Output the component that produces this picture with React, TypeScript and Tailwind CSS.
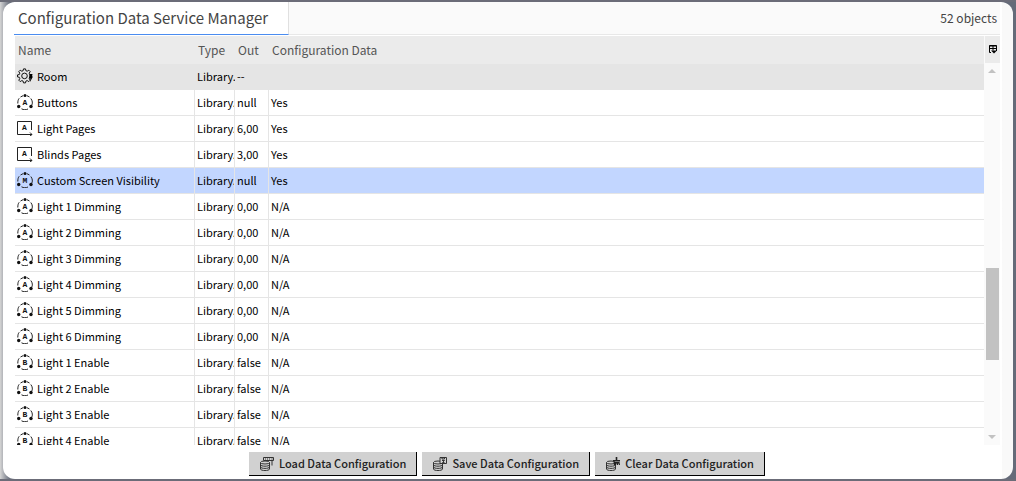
import { useState } from 'react';

type IconKind = 'gear' | 'analog' | 'boolean' | 'memory' | 'page';

interface DataObject {
    name: string;
    icon: IconKind;
    type: string;
    out: string;
    config: string;
}

const objects: DataObject[] = [
    { name: 'Room', icon: 'gear', type: 'Library.', out: '--', config: '' },
    { name: 'Buttons', icon: 'analog', type: 'Library.', out: 'null', config: 'Yes' },
    { name: 'Light Pages', icon: 'page', type: 'Library.', out: '6,00', config: 'Yes' },
    { name: 'Blinds Pages', icon: 'page', type: 'Library.', out: '3,00', config: 'Yes' },
    { name: 'Custom Screen Visibility', icon: 'memory', type: 'Library.', out: 'null', config: 'Yes' },
    { name: 'Light 1 Dimming', icon: 'analog', type: 'Library.', out: '0,00', config: 'N/A' },
    { name: 'Light 2 Dimming', icon: 'analog', type: 'Library.', out: '0,00', config: 'N/A' },
    { name: 'Light 3 Dimming', icon: 'analog', type: 'Library.', out: '0,00', config: 'N/A' },
    { name: 'Light 4 Dimming', icon: 'analog', type: 'Library.', out: '0,00', config: 'N/A' },
    { name: 'Light 5 Dimming', icon: 'analog', type: 'Library.', out: '0,00', config: 'N/A' },
    { name: 'Light 6 Dimming', icon: 'analog', type: 'Library.', out: '0,00', config: 'N/A' },
    { name: 'Light 1 Enable', icon: 'boolean', type: 'Library.', out: 'false', config: 'N/A' },
    { name: 'Light 2 Enable', icon: 'boolean', type: 'Library.', out: 'false', config: 'N/A' },
    { name: 'Light 3 Enable', icon: 'boolean', type: 'Library.', out: 'false', config: 'N/A' },
    { name: 'Light 4 Enable', icon: 'boolean', type: 'Library.', out: 'false', config: 'N/A' },
];

const letters = { analog: 'A', boolean: 'B', memory: 'M', page: 'A' };

function ObjectIcon({ kind }: { kind: IconKind }) {
    if (kind === 'gear') {
        return (
            <svg width="16" height="16" viewBox="0 0 16 16" fill="none" stroke="#111" className="shrink-0">
                <path d="M6.5.9h2l.4 1.8 1.3.5 1.6-1 1.4 1.4-1 1.6.5 1.3 1.8.4v2l-1.8.4-.5 1.3 1 1.6-1.4 1.4-1.6-1-1.3.5-.4 1.8h-2l-.4-1.8-1.3-.5-1.6 1-1.4-1.4 1-1.6-.5-1.3-1.8-.4v-2l1.8-.4.5-1.3-1-1.6 1.4-1.4 1.6 1 1.3-.5z" />
                <circle cx="7.5" cy="7.9" r="2.8" />
                <path d="M12.5 6h3l-.5 2.500h1L13 14l.4-3.500H12z" fill="#000" stroke="none" />
            </svg>
        );
    }

    if (kind === 'page') {
        return (
            <svg width="16" height="16" viewBox="0 0 16 16" fill="none" stroke="#222" className="shrink-0">
                <path d="M14.500 10V1.500H.5v13H15" />
                <path d="M13 12.500l2 2-2 1.500" />
                <text x="7.500" y="10" textAnchor="middle" fontSize="8" fontWeight="700" fontFamily="Liberation Mono, monospace" fill="#111" stroke="none">
                    {letters[kind]}
                </text>
            </svg>
        );
    }

    return (
        <svg width="16" height="16" viewBox="0 0 16 16" fill="none" stroke="#222" className="shrink-0">
            <path d="M.8 9.500C.8 7 1.200 5.500 2.200 4.300M3.500 3 6 1.700M10 1.700 12.500 3M13.800 4.500c1.800 2.200 2 5 .8 7M4.500 14.800c2 1.200 4.500 1.200 6.500.2" />
            <circle cx="8" cy="1.600" r="1.500" fill="#111" stroke="none" />
            <circle cx="1.700" cy="12.500" r="1.700" fill="#111" stroke="none" />
            <circle cx="14" cy="12.500" r="1.700" fill="#111" stroke="none" />
            <text x="8" y="11" textAnchor="middle" fontSize="8" fontWeight="700" fontFamily="Liberation Mono, monospace" fill="#111" stroke="none">
                {letters[kind]}
            </text>
        </svg>
    );
}

function DatabaseIcon({ action }: { action: 'load' | 'save' | 'clear' }) {
    return (
        <svg width="15" height="14" viewBox="0 0 15 14" fill="none" stroke="#333" className="shrink-0">
            <ellipse cx="5" cy="5.500" rx="4.500" ry="1.500" />
            <path d="M.5 5.500v6.500c0 2 9 2 9 0V5.500M.5 7.700c0 2 9 2 9 0M.5 9.900c0 2 9 2 9 0" />
            {action === 'load' && (
                <>
                    <path d="M3.500.5h10v3h-10z" fill="#d1d1d1" />
                    <path d="M5 2h1M7 2h1M9 2h1M11.500 2h1M12 3.500v5" />
                </>
            )}
            {action === 'save' && (
                <>
                    <path d="M7 .5h6.500v6H7z" fill="#d1d1d1" />
                    <path d="M9 .5v1.500h2.500V.5M9 3.500h2.500L9.500 5.500h2" />
                </>
            )}
            {action === 'clear' && (
                <>
                    <path d="M7 3h7v1.500H7z" fill="#222" stroke="none" />
                    <path d="M9.700 0h1.600v3H9.700zM7.500 5h6L14 8h-1l-.5-2-.5 2h-1l-.5-2-.5 2H8z" fill="#222" stroke="none" />
                </>
            )}
        </svg>
    );
}

interface ActionButtonProps {
    label: string;
    action: 'load' | 'save' | 'clear';
}

function ActionButton({ label, action }: ActionButtonProps) {
    return (
        <button className="flex h-6 items-center gap-1 whitespace-nowrap border-r border-b border-black bg-[#d1d1d1] pr-2.5 pl-[11px] text-[11px] font-medium text-[#222]">
            <DatabaseIcon action={action} />
            {label}
        </button>
    );
}

export default function App() {
    const [selected, setSelected] = useState(4);

    return (
        <div className="h-screen bg-linear-to-r from-[#d5d5d5] to-[#656b79] to-[1%] font-['Noto_Sans_CJK_SC',sans-serif]">
            <main className="flex h-full flex-col border-y-2 border-[#6b6c78] px-[3px]">
                <div className="flex min-h-0 flex-1 flex-col rounded-xl bg-linear-to-l from-[#f9f9f9] from-[11px] to-white to-[11px] pr-[13px] pl-[11px]">
                    {/* Title tab */}
                    <header className="flex h-[33px] shrink-0 items-stretch justify-between border-b border-[#e8e8e8] bg-[#fafafa]">
                        <h1 className="-mb-px flex items-center border-r border-b border-r-[#e0e0e0] border-b-[#4a8cf0] bg-white pr-5 pl-1 text-[15px] whitespace-nowrap text-[#444]">
                            Configuration Data Service Manager
                        </h1>
                        <span className="flex items-center pr-[3px] text-xs text-[#444]">52 objects</span>
                    </header>

                    {/* Object list */}
                    <div className="ml-px flex min-h-0 flex-1 pt-px">
                        <div className="min-w-0 flex-1 overflow-hidden">
                            <table className="w-full table-fixed border-separate border-spacing-0 text-left text-[11px]">
                                <colgroup>
                                    <col className="w-[180px]" />
                                    <col className="w-10" />
                                    <col className="w-[34px]" />
                                    <col />
                                </colgroup>
                                <thead>
                                    <tr className="h-7 bg-[#ebebeb] text-xs text-[#555]">
                                        <th className="py-0 pl-[3px] font-normal">Name</th>
                                        <th className="py-0 pl-[3px] font-normal">Type</th>
                                        <th className="py-0 pl-[3px] font-normal">Out</th>
                                        <th className="py-0 pl-[3px] font-normal">Configuration Data</th>
                                    </tr>
                                </thead>
                                <tbody className="text-black">
                                    {objects.map((obj, index) => {
                                        let rowClass = 'h-[26px] leading-6 *:border-[#e5e5e5] *:border-b *:py-0 *:align-top ';
                                        if (obj.icon === 'gear') rowClass += 'bg-[#e5e5e5]';
                                        else if (index === selected) rowClass += 'bg-[#c2d6ff] *:not-last:border-r';
                                        else rowClass += 'bg-white *:not-last:border-r';

                                        return (
                                            <tr key={obj.name} className={rowClass} onClick={() => setSelected(index)}>
                                                <td className="pl-[2px]">
                                                    <div className="flex items-center gap-1 whitespace-nowrap">
                                                        <ObjectIcon kind={obj.icon} />
                                                        {obj.name}
                                                    </div>
                                                </td>
                                                <td className="overflow-hidden pl-[2px] whitespace-nowrap">{obj.type}</td>
                                                <td className="pl-[2px] whitespace-nowrap">{obj.out}</td>
                                                <td className="pl-[2px] whitespace-nowrap">{obj.config}</td>
                                            </tr>
                                        );
                                    })}
                                </tbody>
                            </table>
                        </div>

                        {/* Column picker and scroll bar */}
                        <div className="flex w-4 shrink-0 flex-col bg-[#fafafa]">
                            <button aria-label="Choose columns" className="ml-px flex h-[27px] w-[15px] shrink-0 items-center justify-center bg-[#ebebeb]">
                                <svg width="8" height="9" viewBox="0 0 8 9" fill="none" stroke="#000">
                                    <path d="M2 7.500H.5v-7h7V6M.5 1h7M.5 3.500h7M4 .5v5" />
                                    <path d="M2 5.500h6L5 8.500z" fill="#000" stroke="none" />
                                </svg>
                            </button>
                            <div className="flex flex-1 flex-col items-center py-1">
                                <svg width="8" height="8" viewBox="0 0 8 8" fill="#c2c2c2" className="shrink-0">
                                    <path d="M4 2l4 4H0z" />
                                </svg>
                                <div className="w-full grow-[193]" />
                                <div className="w-[13px] grow-[92] bg-[#c2c2c2]" />
                                <div className="w-full grow-[73]" />
                                <svg width="8" height="8" viewBox="0 0 8 8" fill="#c2c2c2" className="shrink-0">
                                    <path d="M4 6L0 2h8z" />
                                </svg>
                            </div>
                        </div>
                    </div>

                    {/* Actions */}
                    <footer className="flex shrink-0 justify-center gap-[5px] pt-[7px] pb-[3px]">
                        <ActionButton label="Load Data Configuration" action="load" />
                        <ActionButton label="Save Data Configuration" action="save" />
                        <ActionButton label="Clear Data Configuration" action="clear" />
                    </footer>
                </div>
            </main>
        </div>
    );
}
